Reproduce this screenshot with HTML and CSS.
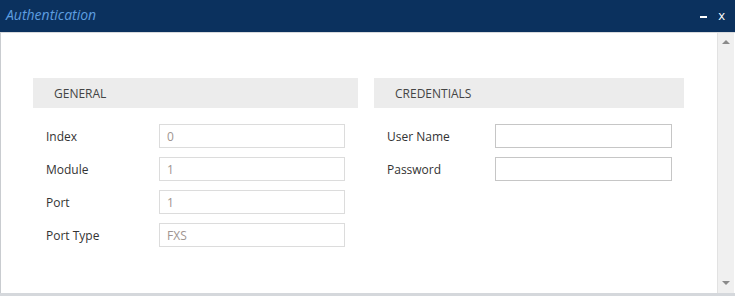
FILE: index.html
```html
<!DOCTYPE html>
<html lang="en">
<head>
    <meta charset="UTF-8">
    <title>Authentication</title>
    <link rel="stylesheet" href="styles.css">
</head>
<body>
    <div class="dialog">
        <div class="dialog-header">
            <span class="dialog-title">Authentication</span>
            <div class="dialog-controls">
                <span class="btn-min"></span>
                <span class="btn-close">x</span>
            </div>
        </div>
        <div class="dialog-body">
            <div class="content">
                <section class="group group-general">
                    <h3 class="group-title">GENERAL</h3>
                    <div class="row">
                        <label>Index</label>
                        <input type="text" value="0" readonly>
                    </div>
                    <div class="row">
                        <label>Module</label>
                        <input type="text" value="1" readonly>
                    </div>
                    <div class="row">
                        <label>Port</label>
                        <input type="text" value="1" readonly>
                    </div>
                    <div class="row">
                        <label>Port Type</label>
                        <input type="text" value="FXS" readonly>
                    </div>
                </section>
                <section class="group group-credentials">
                    <h3 class="group-title">CREDENTIALS</h3>
                    <div class="row">
                        <label>User Name</label>
                        <input type="text" class="editable">
                    </div>
                    <div class="row">
                        <label>Password</label>
                        <input type="password" class="editable">
                    </div>
                </section>
            </div>
            <div class="scrollbar">
                <span class="arrow arrow-up"></span>
                <span class="arrow arrow-down"></span>
            </div>
        </div>
    </div>
</body>
</html>
```

FILE: styles.css
```css
body {
    margin: 0;
    padding: 0;
    font-family: "Open Sans", "Liberation Sans", sans-serif;
    background-color: #fff;
}

.dialog {
    width: 735px;
    height: 296px;
    display: flex;
    flex-direction: column;
    box-sizing: border-box;
    border-bottom: 3px solid #d5d8dc;
}

.dialog-header {
    height: 32px;
    background-color: #0b315e;
    display: flex;
    align-items: center;
    justify-content: space-between;
    padding: 0 10px 0 6px;
    flex-shrink: 0;
}

.dialog-title {
    color: #5e9ee0;
    font-style: italic;
    font-size: 14px;
    margin-top: -4px;
}

.dialog-controls {
    display: flex;
    align-items: center;
    gap: 11px;
}

.btn-min {
    width: 7px;
    height: 2px;
    background-color: #fff;
    margin-top: 2px;
}

.btn-close {
    color: #fff;
    font-size: 13px;
    line-height: 12px;
    margin-top: -2px;
}

.dialog-body {
    flex: 1;
    display: flex;
    border-top: 1px solid #d8dadd;
    border-left: 1px solid #c9ccd0;
}

.content {
    flex: 1;
    display: flex;
    gap: 16px;
    padding: 45px 0 0 32px;
}

.group-general {
    width: 325px;
}

.group-credentials {
    width: 310px;
}

.group-title {
    margin: 0 0 16px;
    height: 30px;
    line-height: 31px;
    background-color: #ececec;
    padding-left: 21px;
    font-size: 12px;
    font-weight: normal;
    color: #444;
}

.row {
    display: flex;
    align-items: center;
    margin-bottom: 9px;
    padding-left: 13px;
}

.row label {
    font-size: 12px;
    color: #333;
    width: 113px;
    padding-top: 1px;
}

.group-credentials .row label {
    width: 108px;
}

.row input {
    box-sizing: border-box;
    width: 186px;
    height: 24px;
    border: 1px solid #dcdcdc;
    padding: 0 7px;
    font-family: inherit;
    font-size: 12px;
    color: #a09490;
    outline: none;
}

.row input.editable {
    width: 177px;
    border-color: #c6c6c6;
}

.scrollbar {
    width: 16px;
    background-color: #f0f0f0;
    border-left: 1px solid #e2e2e2;
    display: flex;
    flex-direction: column;
    justify-content: space-between;
    align-items: center;
    padding: 7px 0 8px;
    margin-right: 1px;
}

.arrow {
    width: 0;
    height: 0;
    border-left: 4px solid transparent;
    border-right: 4px solid transparent;
}

.arrow-up {
    border-bottom: 4px solid #8a8a8a;
}

.arrow-down {
    border-top: 4px solid #8a8a8a;
}
```
